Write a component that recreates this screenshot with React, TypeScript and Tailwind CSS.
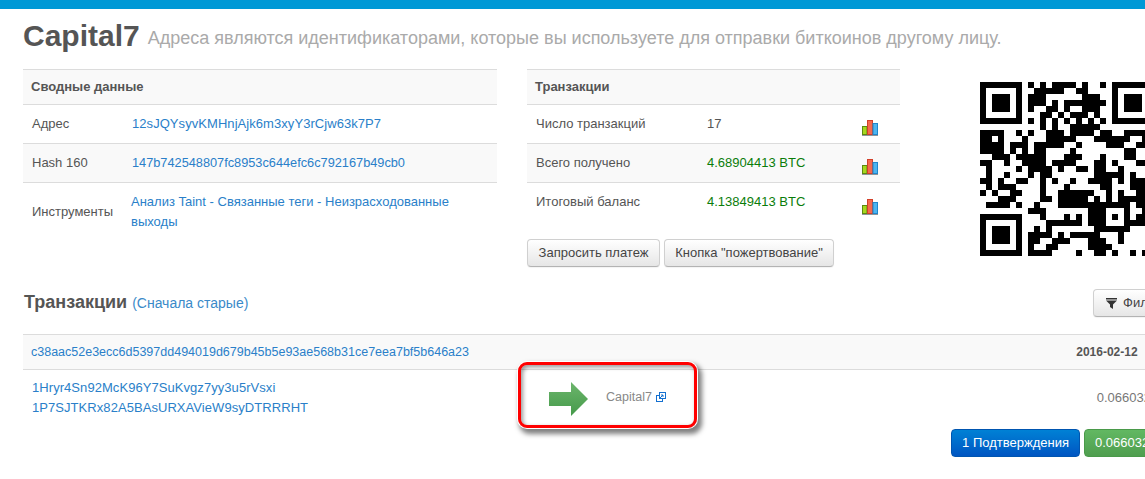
const QR_ROWS = [
  "0-6 8 10 12-15 17 20 22-28",
  "0 6 9-13 16-17 22 28",
  "0 2-4 6 8-10 17-19 22 24-26 28",
  "0 2-4 6 8-10 12 14-20 22 24-26 28",
  "0 2-4 6 8 11-12 14 17-19 22 24-26 28",
  "0 6 10-11 13 15-17 19 22 28",
  "0-6 8 10 12 14 16 18 20 22-28",
  "10 12 15-19",
  "0-3 6 8 11-13 15-18 20-21 24-27",
  "0-1 3 7 11-15 19-24 27",
  "0-3 5-7 9-13 16 21-23 26-27",
  "0-3 5 7 9-10 15 24-25",
  "2-4 6-10 14-16 20 24-25",
  "0-1 4 7-10 12-15 19-20 22 26-27",
  "1 6 8-11 13 16-17 19-20 23",
  "1 4 8 10-11 19-23 25",
  "0-1 3 6-7 10 12 15 18-21 23 25-27",
  "1 3-5 10 14 20-21 25-27",
  "0 2 5-6 10 13-18 21 23 26-27",
  "3-5 10-11 13-17 19 21 23-27",
  "1-4 6 9 13-24 26-27",
  "8-10 18-20 24 27",
  "0-6 10 14 16 18-20 22 24 26-27",
  "0 6 11-16 18-20 24-27",
  "0 2-4 6 9 11 19-24",
  "0 2-4 6 8-11 13 15-19 23",
  "0 2-4 6 8-9 12-14 18-20 23",
  "0 6 8 11-12 18-21",
  "0-6 8-11 16 19-20 22 25 27",
]

function qrPath() {
  let d = ""
  QR_ROWS.forEach((row, y) => {
    row.split(" ").forEach((part) => {
      const [a, b] = part.split("-").map(Number)
      d += `M${a} ${y}H${(b ?? a) + 1}V${y + 1}H${a}Z`
    })
  })
  return d
}

function BarIcon() {
  return (
    <svg width="16" height="16" viewBox="0 0 16 16" className="block">
      <rect x="0.5" y="6.5" width="4.5" height="8" fill="#a6d71e" stroke="#5c8a10" />
      <rect x="5.5" y="0.5" width="5" height="14" fill="#f5694e" stroke="#d2402a" />
      <rect x="11" y="3.5" width="4.5" height="11" fill="#4db4ef" stroke="#1f86cc" />
      <rect x="0" y="15" width="16" height="1" fill="#8f9499" />
    </svg>
  )
}

const grayBtn =
  "rounded-[4px] border border-[#d0d0d0] border-b-[#b3b3b3] bg-gradient-to-b from-white to-[#e6e6e6] text-[#444] text-[13px] shadow-[0_1px_1px_rgba(0,0,0,0.05)]"

export default function App() {
  return (
    <div className="h-[479px] w-[1145px] overflow-hidden bg-white font-['Liberation_Sans',Arial,sans-serif] text-[13px] text-[#555]">
      <div className="h-[9px] bg-[#0099d6]" />

      <div className="w-[1210px] pl-[23px]">
        <div className="flex h-[60px] items-start pt-[10px]">
          <h1 className="text-[30px] leading-[34px] font-bold text-[#555]">Capital7</h1>
          <p className="ml-[8px] pt-[7px] text-[18px] leading-[24px] text-[#aaa]">
            Адреса являются идентификаторами, которые вы используете для отправки биткоинов другому лицу.
          </p>
        </div>

        <div className="flex h-[220px] items-start">
          <div className="w-[474px]">
            <div className="flex h-[36px] items-center border-y border-[#dcdcdc] bg-[#f9f9f9] pl-[8px] font-bold">
              Сводные данные
            </div>
            <div className="flex h-[39px] items-center border-b border-[#dcdcdc] pl-[9px]">
              <span className="w-[100px]">Адрес</span>
              <span className="tracking-[0.06px] text-[#2a7fc9]">12sJQYsyvKMHnjAjk6m3xyY3rCjw63k7P7</span>
            </div>
            <div className="flex h-[39px] items-center border-b border-[#dcdcdc] bg-[#f9f9f9] pl-[9px]">
              <span className="w-[100px]">Hash 160</span>
              <span className="text-[12.75px] text-[#2a7fc9]">147b742548807fc8953c644efc6c792167b49cb0</span>
            </div>
            <div className="flex h-[58px] items-center pl-[9px]">
              <span className="w-[99px]">Инструменты</span>
              <div className="w-[340px] leading-[20px] text-[#2a7fc9]">
                Анализ Taint - Связанные теги - Неизрасходованные выходы
              </div>
            </div>
          </div>

          <div className="ml-[30px] w-[373px]">
            <div className="flex h-[36px] items-center border-y border-[#dcdcdc] bg-[#f9f9f9] pl-[8px] font-bold">
              Транзакции
            </div>
            <div className="flex h-[39px] items-center border-b border-[#dcdcdc] pl-[9px]">
              <span className="w-[171px]">Число транзакций</span>
              <span className="w-[155px]">17</span>
              <div className="mt-[8px]"><BarIcon /></div>
            </div>
            <div className="flex h-[39px] items-center border-b border-[#dcdcdc] bg-[#f9f9f9] pl-[9px]">
              <span className="w-[171px]">Всего получено</span>
              <span className="w-[155px] text-[#0a7d0a]">4.68904413 BTC</span>
              <div className="mt-[8px]"><BarIcon /></div>
            </div>
            <div className="flex h-[38px] items-center pl-[9px]">
              <span className="w-[171px]">Итоговый баланс</span>
              <span className="w-[155px] text-[#0a7d0a]">4.13849413 BTC</span>
              <div className="mt-[9px]"><BarIcon /></div>
            </div>
            <div className="mt-[18px] flex gap-[4px]">
              <button className={`h-[28px] w-[133px] ${grayBtn}`}>Запросить платеж</button>
              <button className={`h-[28px] w-[170px] ${grayBtn}`}>Кнопка "пожертвование"</button>
            </div>
          </div>

          <svg
            width="174"
            height="174"
            viewBox="0 0 29 29"
            shapeRendering="crispEdges"
            className="mt-[13px] ml-[80px] shrink-0"
          >
            <path d={qrPath()} fill="#000" />
          </svg>
        </div>

        <div className="flex h-[45px] items-start">
          <h2 className="pt-[1px] pl-[1px] text-[18px] leading-[24px] font-bold text-[#555]">Транзакции</h2>
          <a className="ml-[5px] pt-[2px] text-[14px] leading-[24px] text-[#3a8ac9]">(Сначала старые)</a>
          <button className={`ml-auto mr-[27px] flex h-[28px] w-[90px] items-center pl-[12px] ${grayBtn}`}>
            <svg width="11" height="11" viewBox="0 0 11 11" className="mr-[6px]">
              <path d="M0 0H11V1.5H0ZM0 2.5H11L7 6.5V11L4 9V6.5Z" fill="#333" />
            </svg>
            Фильтр
          </button>
        </div>

        <div className="flex h-[36px] items-center justify-between border-y border-[#dcdcdc] bg-[#f9f9f9] pl-[8px] pr-[13px] text-[12px]">
          <span className="text-[12.5px] text-[#2a7fc9]">c38aac52e3ecc6d5397dd494019d679b45b5e93ae568b31ce7eea7bf5b646a23</span>
          <span className="font-bold text-[#555]">
            2016-02-12<span className="ml-[8px]"> 14:05:29</span>
          </span>
        </div>

        <div className="relative flex h-[59px] items-start">
          <div className="w-[526px] pt-[8px] pl-[9px] leading-[20px] tracking-[0.06px] text-[#2a7fc9]">
            <div>1Hryr4Sn92McK96Y7SuKvgz7yy3u5rVsxi</div>
            <div>1P7SJTKRx82A5BAsURXAVieW9syDTRRRHT</div>
          </div>
          <svg width="40" height="36" viewBox="0 0 40 36" className="mt-[11px] shrink-0">
            <defs>
              <linearGradient id="arrow" x1="0" y1="0" x2="0" y2="1">
                <stop offset="0" stopColor="#6cb56c" />
                <stop offset="1" stopColor="#459a4a" />
              </linearGradient>
            </defs>
            <path d="M0 11H22V1L39 18L22 35V25H0Z" fill="url(#arrow)" />
          </svg>
          <span className="mt-[17px] ml-[17px] text-[12.5px] leading-[20px] text-[#888]">Capital7</span>
          <svg width="10" height="10" viewBox="0 0 10 10" className="mt-[22px] ml-[4px] shrink-0" fill="none" stroke="#1470d0">
            <rect x="0.5" y="3.5" width="6" height="6" />
            <rect x="3.5" y="0.5" width="6" height="6" fill="#fff" />
            <path d="M3 7L7 3M5 3H7V5" />
          </svg>
          <span className="mt-[18px] ml-auto pr-[15px] text-[13px] leading-[20px] text-[#777]">0.06603285 BTC</span>

          <div className="absolute top-[-8px] left-[495px] h-[66px] w-[179px] rounded-[9px] border-[3px] border-[#f00] shadow-[0_0_0_1px_#fff,3px_4px_5px_2px_rgba(0,0,0,0.5),inset_2px_2px_4px_rgba(0,0,0,0.4)]" />
        </div>

        <div className="flex justify-end gap-[4px] pr-[6px]">
          <button className="h-[28px] w-[129px] shrink-0 rounded-[4px] border border-[#0055b0] bg-gradient-to-b from-[#0081d5] to-[#0055c2] text-[13px] text-white">
            1 Подтверждения
          </button>
          <button className="h-[28px] w-[120px] shrink-0 rounded-[4px] border border-[#4a9a4a] bg-gradient-to-b from-[#62b862] to-[#4f9e4f] pl-[10px] text-left text-[13px] whitespace-nowrap text-white">
            0.06603285 BTC
          </button>
        </div>
      </div>
    </div>
  )
}
